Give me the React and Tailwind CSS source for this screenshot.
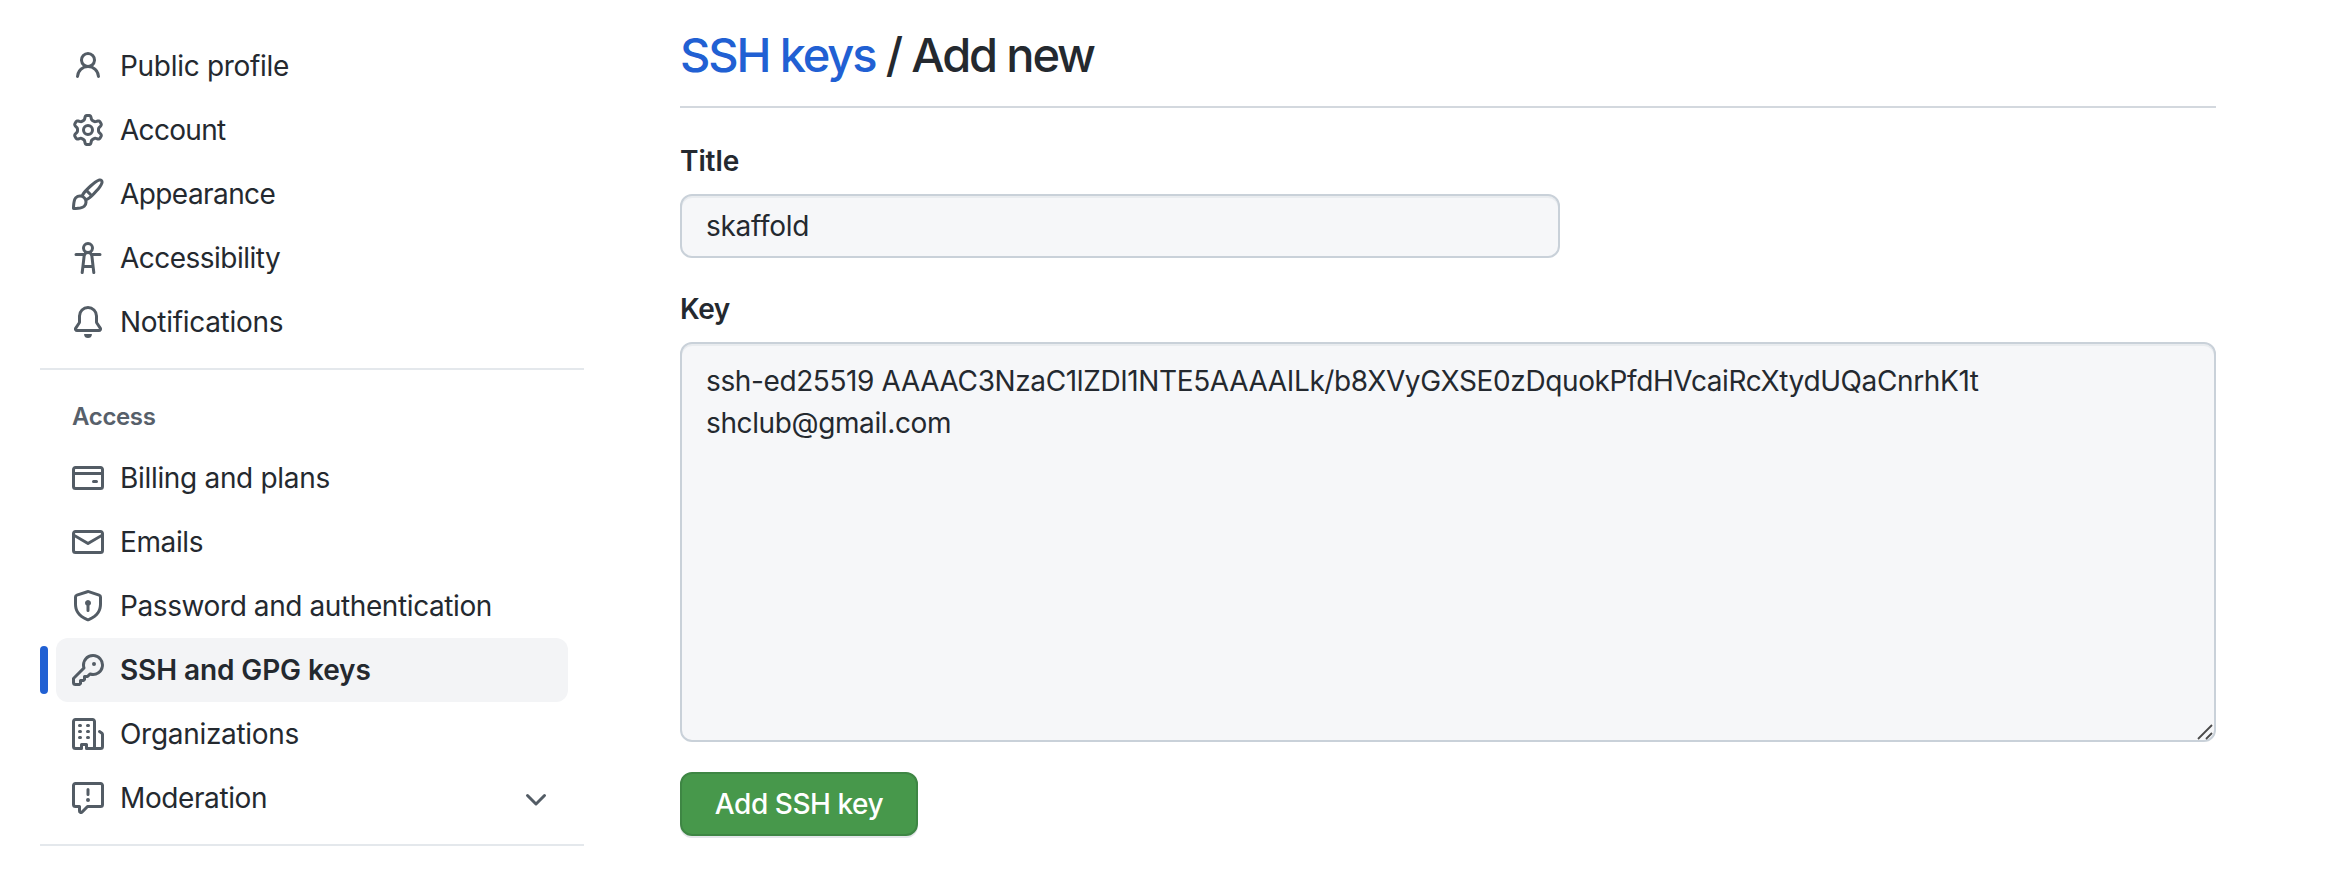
const ICONS = {
  person:
    "M10.561 8.073a6.005 6.005 0 0 1 3.432 5.142.75.75 0 1 1-1.498.07 4.5 4.5 0 0 0-8.99 0 .75.75 0 0 1-1.498-.07 6.004 6.004 0 0 1 3.431-5.142 3.999 3.999 0 1 1 5.123 0ZM10.5 5a2.5 2.5 0 1 0-5 0 2.5 2.5 0 0 0 5 0Z",
  gear:
    "M8 0a8.2 8.2 0 0 1 .701.031C9.444.095 9.99.645 10.16 1.29l.288 1.107c.018.066.079.158.212.224.231.114.454.243.668.386.123.082.233.09.299.071l1.103-.303c.644-.176 1.392.021 1.82.63.27.385.506.792.704 1.218.315.675.111 1.422-.364 1.891l-.814.806c-.049.048-.098.147-.088.294.016.257.016.515 0 .772-.01.147.038.246.088.294l.814.806c.475.469.679 1.216.364 1.891a7.977 7.977 0 0 1-.704 1.217c-.428.61-1.176.807-1.82.63l-1.102-.302c-.067-.019-.177-.011-.3.071a5.909 5.909 0 0 1-.668.386c-.133.066-.194.158-.211.224l-.29 1.106c-.168.646-.715 1.196-1.458 1.26a8.006 8.006 0 0 1-1.402 0c-.743-.064-1.289-.614-1.458-1.26l-.289-1.106c-.018-.066-.079-.158-.212-.224a5.738 5.738 0 0 1-.668-.386c-.123-.082-.233-.09-.299-.071l-1.103.303c-.644.176-1.392-.021-1.82-.63a8.12 8.12 0 0 1-.704-1.218c-.315-.675-.111-1.422.363-1.891l.815-.806c.05-.048.098-.147.088-.294a6.214 6.214 0 0 1 0-.772c.01-.147-.038-.246-.088-.294l-.815-.806C.635 6.045.431 5.298.746 4.623a7.92 7.92 0 0 1 .704-1.217c.428-.61 1.176-.807 1.82-.63l1.102.302c.067.019.177.011.3-.071.214-.143.437-.272.668-.386.133-.066.194-.158.211-.224l.29-1.106C6.009.645 6.556.095 7.299.03 7.53.01 7.764 0 8 0Zm-.571 1.525c-.036.003-.108.036-.137.146l-.289 1.105c-.147.561-.549.967-.998 1.189-.173.086-.34.183-.5.29-.417.278-.97.423-1.529.27l-1.103-.303c-.109-.03-.175.016-.195.045-.22.312-.412.644-.573.99-.014.031-.021.11.059.19l.815.806c.411.406.562.957.53 1.456a4.709 4.709 0 0 0 0 .582c.032.499-.119 1.05-.53 1.456l-.815.806c-.081.08-.073.159-.059.19.162.346.353.677.573.989.02.03.085.076.195.046l1.102-.303c.56-.153 1.113-.008 1.53.27.161.107.328.204.501.29.447.222.85.629.997 1.189l.289 1.105c.029.109.101.143.137.146a6.6 6.6 0 0 0 1.142 0c.036-.003.108-.036.137-.146l.289-1.105c.147-.561.549-.967.998-1.189.173-.086.34-.183.5-.29.417-.278.97-.423 1.529-.27l1.103.303c.109.029.175-.016.195-.045.22-.313.411-.644.573-.99.014-.031.021-.11-.059-.19l-.815-.806c-.411-.406-.562-.957-.53-1.456a4.709 4.709 0 0 0 0-.582c-.032-.499.119-1.05.53-1.456l.815-.806c.081-.08.073-.159.059-.19a6.464 6.464 0 0 0-.573-.989c-.02-.03-.085-.076-.195-.046l-1.102.303c-.56.153-1.113.008-1.53-.27a4.44 4.44 0 0 0-.501-.29c-.447-.222-.85-.629-.997-1.189l-.289-1.105c-.029-.11-.101-.143-.137-.146a6.6 6.6 0 0 0-1.142 0ZM11 8a3 3 0 1 1-6 0 3 3 0 0 1 6 0ZM9.5 8a1.5 1.5 0 1 0-3.001.001A1.5 1.5 0 0 0 9.5 8Z",
  paintbrush:
    "M11.134 1.535c.7-.509 1.416-.942 2.076-1.155.649-.21 1.463-.267 2.069.34.603.601.568 1.411.368 2.07-.202.668-.624 1.39-1.125 2.096-1.011 1.424-2.496 2.987-3.775 4.249-1.098 1.084-2.132 1.839-3.04 2.3a3.744 3.744 0 0 1-1.055 3.217c-.431.431-1.065.691-1.657.861-.614.177-1.294.287-1.914.357A21.151 21.151 0 0 1 .797 16H.743l.007-.75H.749L.742 16a.75.75 0 0 1-.743-.742l.743-.008-.742.007v-.054a21.25 21.25 0 0 1 .13-2.284c.067-.647.187-1.287.358-1.914.17-.591.43-1.226.86-1.657a3.746 3.746 0 0 1 3.227-1.054c.466-.893 1.225-1.907 2.314-2.982 1.271-1.255 2.833-2.75 4.245-3.777ZM1.62 13.089c-.051.464-.086.929-.104 1.395.466-.018.932-.053 1.396-.104a10.511 10.511 0 0 0 1.668-.309c.526-.151.856-.325 1.011-.48a2.25 2.25 0 1 0-3.182-3.182c-.155.155-.329.485-.48 1.01a10.515 10.515 0 0 0-.309 1.67Zm10.396-10.34c-1.224.89-2.605 2.189-3.822 3.384l1.718 1.718c1.21-1.205 2.51-2.597 3.387-3.833.47-.662.78-1.227.912-1.662.134-.444.032-.551.009-.575h-.001V1.78c-.014-.014-.113-.113-.548.027-.432.14-.995.462-1.655.942Zm-4.832 7.266-.001.001a9.859 9.859 0 0 0 1.63-1.142L7.155 7.216a9.7 9.7 0 0 0-1.161 1.607c.482.302.889.71 1.19 1.192Z",
  accessibility:
    "M9.923 5.302c.063.063.122.129.178.198H14A.75.75 0 0 1 14 7h-3.3l.578 5.163.362 2.997a.75.75 0 0 1-1.49.18L9.868 13H6.132l-.282 2.34a.75.75 0 0 1-1.49-.18l.362-2.997L5.3 7H2a.75.75 0 0 1 0-1.5h3.9a2.54 2.54 0 0 1 .176-.198 3 3 0 1 1 3.847 0ZM9.2 7.073h-.001a1.206 1.206 0 0 0-2.398 0L6.305 11.5h3.39ZM9.5 3a1.5 1.5 0 1 0-3.001.001A1.5 1.5 0 0 0 9.5 3Z",
  bell:
    "M8 16a2 2 0 0 0 1.985-1.75c.017-.137-.097-.25-.235-.25h-3.5c-.138 0-.252.113-.235.25A2 2 0 0 0 8 16ZM3 5a5 5 0 0 1 10 0v2.947c0 .05.015.098.042.139l1.703 2.555A1.519 1.519 0 0 1 13.482 13H2.518a1.516 1.516 0 0 1-1.263-2.36l1.703-2.554A.255.255 0 0 0 3 7.947Zm5-3.5A3.5 3.5 0 0 0 4.5 5v2.947c0 .346-.102.683-.294.97l-1.703 2.556a.017.017 0 0 0-.003.01l.001.006c0 .002.002.004.004.006l.006.004.007.001h10.964l.007-.001.006-.004.004-.006.001-.007a.017.017 0 0 0-.003-.01l-1.703-2.554a1.745 1.745 0 0 1-.294-.97V5A3.5 3.5 0 0 0 8 1.5Z",
  card:
    "M10.75 9a.75.75 0 0 0 0 1.5h1.5a.75.75 0 0 0 0-1.5h-1.5ZM0 3.75C0 2.784.784 2 1.75 2h12.5c.966 0 1.75.784 1.75 1.75v8.5A1.75 1.75 0 0 1 14.25 14H1.75A1.75 1.75 0 0 1 0 12.25ZM14.5 6.5h-13v5.75c0 .138.112.25.25.25h12.5a.25.25 0 0 0 .25-.25Zm0-2.75a.25.25 0 0 0-.25-.25H1.75a.25.25 0 0 0-.25.25V5h13Z",
  mail:
    "M1.75 2h12.5c.966 0 1.75.784 1.75 1.75v8.5A1.75 1.75 0 0 1 14.25 14H1.75A1.75 1.75 0 0 1 0 12.25v-8.5C0 2.784.784 2 1.75 2ZM1.5 12.251c0 .138.112.25.25.25h12.5a.25.25 0 0 0 .25-.25V5.809L8.38 9.397a.75.75 0 0 1-.76 0L1.5 5.809v6.442Zm13-8.181v-.32a.25.25 0 0 0-.25-.25H1.75a.25.25 0 0 0-.25.25v.32L8 7.88Z",
  shield:
    "m8.533.133 5.25 1.68A1.75 1.75 0 0 1 15 3.48V7c0 1.566-.32 3.182-1.303 4.682-.983 1.498-2.585 2.813-5.032 3.855a1.697 1.697 0 0 1-1.33 0c-2.447-1.042-4.049-2.357-5.032-3.855C1.32 10.182 1 8.566 1 7V3.48a1.755 1.755 0 0 1 1.217-1.667l5.25-1.68a1.748 1.748 0 0 1 1.066 0Zm-.61 1.429.001.001-5.25 1.68a.251.251 0 0 0-.174.237V7c0 1.36.275 2.666 1.057 3.859.784 1.194 2.121 2.342 4.366 3.298a.196.196 0 0 0 .154 0c2.245-.957 3.582-2.103 4.366-3.297C13.225 9.666 13.5 8.358 13.5 7V3.48a.25.25 0 0 0-.174-.238l-5.25-1.68a.25.25 0 0 0-.153 0ZM9.5 6.5c0 .536-.286 1.032-.75 1.3v2.45a.75.75 0 0 1-1.5 0V7.8A1.5 1.5 0 1 1 9.5 6.5Z",
  key:
    "M10.5 0a5.499 5.499 0 1 1-1.288 10.848l-.932.932a.749.749 0 0 1-.53.22H7v.75a.749.749 0 0 1-.22.53l-.5.5a.749.749 0 0 1-.53.22H5v.75a.749.749 0 0 1-.22.53l-.5.5a.749.749 0 0 1-.53.22h-2A1.75 1.75 0 0 1 0 14.25v-2c0-.199.079-.389.22-.53l4.932-4.932A5.5 5.5 0 0 1 10.5 0Zm-4 5.5c-.001.431.069.86.205 1.269a.75.75 0 0 1-.181.768L1.5 12.56v1.69c0 .138.112.25.25.25h1.69l.06-.06v-1.19a.75.75 0 0 1 .75-.75h1.19l.06-.06v-1.19a.75.75 0 0 1 .75-.75h1.19l1.023-1.025a.75.75 0 0 1 .768-.18A4 4 0 1 0 6.5 5.5ZM11 6a1 1 0 1 1 0-2 1 1 0 0 1 0 2Z",
  organization:
    "M1.75 16A1.75 1.75 0 0 1 0 14.25V1.75C0 .784.784 0 1.75 0h8.5C11.216 0 12 .784 12 1.75v12.5c0 .085-.006.168-.018.25h2.268a.25.25 0 0 0 .25-.25V8.285a.25.25 0 0 0-.111-.208l-1.055-.703a.749.749 0 1 1 .832-1.248l1.055.703c.487.325.779.871.779 1.456v5.965A1.75 1.75 0 0 1 14.25 16h-3.5a.766.766 0 0 1-.197-.026c-.099.017-.2.026-.303.026h-3a.75.75 0 0 1-.75-.75V14h-1v1.25a.75.75 0 0 1-.75.75Zm-.25-1.75c0 .138.112.25.25.25H4v-1.25a.75.75 0 0 1 .75-.75h2.5a.75.75 0 0 1 .75.75v1.25h2.25a.25.25 0 0 0 .25-.25V1.75a.25.25 0 0 0-.25-.25h-8.5a.25.25 0 0 0-.25.25ZM3.75 6h.5a.75.75 0 0 1 0 1.5h-.5a.75.75 0 0 1 0-1.5ZM3 3.75A.75.75 0 0 1 3.75 3h.5a.75.75 0 0 1 0 1.5h-.5A.75.75 0 0 1 3 3.75Zm4 3A.75.75 0 0 1 7.75 6h.5a.75.75 0 0 1 0 1.5h-.5A.75.75 0 0 1 7 6.75ZM7.75 3h.5a.75.75 0 0 1 0 1.5h-.5a.75.75 0 0 1 0-1.5ZM3 9.75A.75.75 0 0 1 3.75 9h.5a.75.75 0 0 1 0 1.5h-.5A.75.75 0 0 1 3 9.75ZM7.75 9h.5a.75.75 0 0 1 0 1.5h-.5a.75.75 0 0 1 0-1.5Z",
  report:
    "M0 1.75C0 .784.784 0 1.75 0h12.5C15.216 0 16 .784 16 1.75v9.5A1.75 1.75 0 0 1 14.25 13H8.06l-2.573 2.573A1.458 1.458 0 0 1 3 14.543V13H1.75A1.75 1.75 0 0 1 0 11.25Zm1.75-.25a.25.25 0 0 0-.25.25v9.5c0 .138.112.25.25.25h2a.75.75 0 0 1 .75.75v2.19l2.72-2.72a.749.749 0 0 1 .53-.22h6.5a.25.25 0 0 0 .25-.25v-9.5a.25.25 0 0 0-.25-.25Zm7 2.25v2.5a.75.75 0 0 1-1.5 0v-2.5a.75.75 0 0 1 1.5 0ZM9 9a1 1 0 1 1-2 0 1 1 0 0 1 2 0Z",
  chevron:
    "M12.78 5.22a.749.749 0 0 1 0 1.06l-4.25 4.25a.749.749 0 0 1-1.06 0L3.22 6.28a.749.749 0 1 1 1.06-1.06L8 8.939l3.72-3.719a.749.749 0 0 1 1.06 0Z",
};

const PROFILE = [
  { label: "Public profile", icon: "person", tracking: "tracking-[-0.3px]" },
  { label: "Account", icon: "gear", tracking: "tracking-[-0.7px]" },
  { label: "Appearance", icon: "paintbrush", tracking: "tracking-[-0.58px]" },
  { label: "Accessibility", icon: "accessibility", tracking: "tracking-[-0.52px]" },
  { label: "Notifications", icon: "bell", tracking: "tracking-[-0.3px]" },
];

const ACCESS = [
  { label: "Billing and plans", icon: "card", tracking: "tracking-[-0.32px]" },
  { label: "Emails", icon: "mail", tracking: "tracking-[-0.4px]" },
  { label: "Password and authentication", icon: "shield", tracking: "tracking-[-0.4px]" },
  { label: "SSH and GPG keys", icon: "key", tracking: "tracking-[-0.1px]", selected: true },
  { label: "Organizations", icon: "organization", tracking: "tracking-[-0.3px]" },
  { label: "Moderation", icon: "report", tracking: "tracking-[-0.4px]", expandable: true },
];

const KEY_TEXT =
  "ssh-ed25519 AAAAC3NzaC1lZDI1NTE5AAAAILk/b8XVyGXSE0zDquokPfdHVcaiRcXtydUQaCnrhK1t shclub@gmail.com";

function Icon({ name, className = "" }) {
  return (
    <svg viewBox="0 0 16 16" fill="currentColor" aria-hidden="true" className={`size-8 shrink-0 text-[#535c65] ${className}`}>
      <path fillRule="evenodd" d={ICONS[name]} />
    </svg>
  );
}

function NavItem({ label, icon, tracking, selected, expandable }) {
  return (
    <li className="flex items-center gap-2">
      <span className={`h-12 w-2 shrink-0 rounded-md ${selected ? "bg-[#2160d3]" : ""}`} />
      <a
        href="#"
        className={`flex h-16 w-[512px] items-center gap-4 rounded-xl px-4 ${selected ? "bg-[#f3f4f6] font-semibold" : ""}`}
      >
        <Icon name={icon} />
        <span className={`grow whitespace-nowrap ${tracking}`}>{label}</span>
        {expandable && <Icon name="chevron" className="mt-1" />}
      </a>
    </li>
  );
}

export default function App() {
  return (
    <div className="flex h-[874px] overflow-hidden bg-white pl-10 font-['Inter',sans-serif] text-[28px] leading-[42px] text-[#24292f]">
      <nav className="w-[544px] shrink-0 pt-[34px]">
        <ul>
          {PROFILE.map((item) => (
            <NavItem key={item.label} {...item} />
          ))}
        </ul>
        <hr className="mt-3.5 border-t-2 border-[#e4e8ec]" />
        <h3 className="mt-[29px] mb-[11px] pl-8 text-2xl leading-9 font-semibold tracking-[-0.35px] text-[#57606a]">Access</h3>
        <ul>
          {ACCESS.map((item) => (
            <NavItem key={item.label} {...item} />
          ))}
        </ul>
        <hr className="mt-3.5 border-t-2 border-[#e4e8ec]" />
      </nav>

      <main className="ml-24 flex w-[1536px] shrink-0 flex-col items-start pt-[19px]">
        <h2 className="w-full border-b-2 border-[#d3d8de] pb-[15px] text-[47px] leading-[72px] font-[450] tracking-[-2.15px]">
          <a href="#" className="text-[#2160d3]">SSH keys</a> / Add new
        </h2>

        <label htmlFor="title" className="mt-8 mb-3 font-semibold tracking-[-0.1px]">Title</label>
        <input
          id="title"
          defaultValue="skaffold"
          className="h-16 w-[880px] rounded-xl border-2 border-[#c9d1d9] bg-[#f6f7f9] px-6 tracking-[-0.3px] shadow-[inset_0_2px_0_#e9ecef] outline-none"
        />

        <label htmlFor="key" className="mt-[30px] mb-3 font-semibold tracking-[-0.4px]">Key</label>
        <div className="relative w-full">
          <textarea
            id="key"
            spellCheck={false}
            defaultValue={KEY_TEXT}
            className="block h-[400px] w-full resize-none rounded-xl border-2 border-[#c9d1d9] bg-[#f6f7f9] px-6 py-4 tracking-[-0.385px] shadow-[inset_0_2px_0_#e9ecef] outline-none"
          />
          <svg viewBox="0 0 16 16" className="absolute right-[3px] bottom-[2px] size-4 text-[#4a4a4a]" fill="none" stroke="currentColor" strokeWidth="1.8">
            <path d="M1 15 15 1M9 15l6-6" />
          </svg>
        </div>

        <button className="mt-[30px] flex h-16 w-[238px] items-center justify-center rounded-xl border-2 border-[#3e8644] bg-[#47984b] font-[550] tracking-[-0.45px] text-white shadow-[0_2px_0_#e4e6ea]">
          Add SSH key
        </button>
      </main>
    </div>
  );
}
